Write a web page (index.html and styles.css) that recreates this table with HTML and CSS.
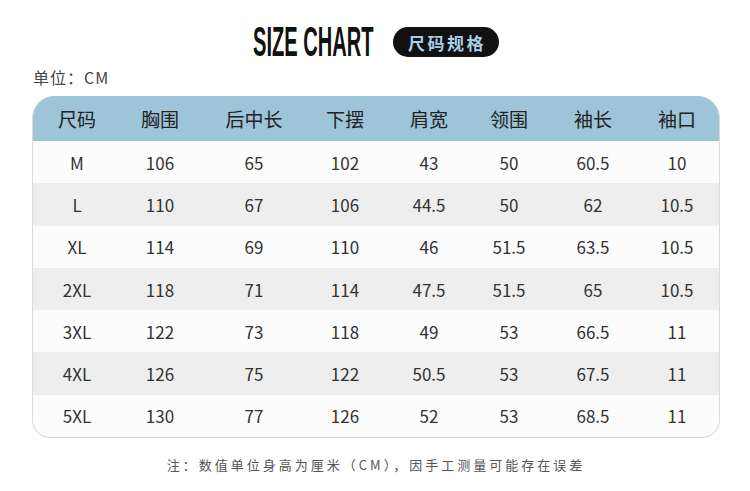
FILE: index.html
```html
<!DOCTYPE html>
<html lang="zh">
<head>
<meta charset="utf-8">
<link rel="stylesheet" href="styles.css">
</head>
<body>
<div class="page">
  <div class="head">
    <svg class="title" width="124" height="40" viewBox="0 0 124 40"><text x="0" y="34" transform="translate(2 0) scale(0.478 1)">SIZE CHART</text></svg>
    <span class="badge">尺码规格</span>
  </div>
  <div class="unit">单位：CM</div>
  <div class="table">
    <div class="row hdr"><span>尺码</span><span>胸围</span><span>后中长</span><span>下摆</span><span>肩宽</span><span>领围</span><span>袖长</span><span>袖口</span></div>
    <div class="row"><span>M</span><span>106</span><span>65</span><span>102</span><span>43</span><span>50</span><span>60.5</span><span>10</span></div>
    <div class="row alt"><span>L</span><span>110</span><span>67</span><span>106</span><span>44.5</span><span>50</span><span>62</span><span>10.5</span></div>
    <div class="row"><span>XL</span><span>114</span><span>69</span><span>110</span><span>46</span><span>51.5</span><span>63.5</span><span>10.5</span></div>
    <div class="row alt"><span>2XL</span><span>118</span><span>71</span><span>114</span><span>47.5</span><span>51.5</span><span>65</span><span>10.5</span></div>
    <div class="row"><span>3XL</span><span>122</span><span>73</span><span>118</span><span>49</span><span>53</span><span>66.5</span><span>11</span></div>
    <div class="row alt"><span>4XL</span><span>126</span><span>75</span><span>122</span><span>50.5</span><span>53</span><span>67.5</span><span>11</span></div>
    <div class="row"><span>5XL</span><span>130</span><span>77</span><span>126</span><span>52</span><span>53</span><span>68.5</span><span>11</span></div>
  </div>
  <div class="note">注：数值单位身高为厘米（CM），因手工测量可能存在误差</div>
</div>
</body>
</html>
```
FILE: styles.css
```css
html, body {
  margin: 0;
  padding: 0;
  background: #fff;
}
.page {
  width: 750px;
  height: 491px;
  font-family: "Noto Sans CJK SC", "Noto Sans", sans-serif;
  color: #333;
  overflow: hidden;
}
.head {
  display: flex;
  justify-content: center;
  align-items: center;
  gap: 18px;
  padding-top: 22px;
  height: 40px;
}
.title {
  overflow: visible;
}
.title text {
  font-family: "Liberation Sans", Arial, sans-serif;
  font-weight: 700;
  font-size: 42px;
  fill: #111;
}
.badge {
  display: inline-flex;
  align-items: center;
  justify-content: center;
  width: 106px;
  height: 30px;
  border-radius: 15px;
  background: #111;
  color: #a6d0e6;
  font-weight: 700;
  font-size: 17px;
  letter-spacing: 2.5px;
  padding-left: 2px;
  box-sizing: border-box;
}
.unit {
  margin: 4px 0 0 33px;
  font-size: 16px;
  letter-spacing: 1px;
  line-height: 22px;
  color: #444;
}
.table {
  margin: 8px 0 0 32px;
  width: 688px;
  box-sizing: border-box;
  border: 1px solid #dadada;
  border-top: none;
  border-radius: 22px 22px 18px 18px;
  overflow: hidden;
  background: #fcfcfc;
}
.row {
  display: grid;
  grid-template-columns: 88px 78px 110px 72px 96px 64px 104px 64px;
  height: 42.3px;
  align-items: center;
  font-size: 17px;
  color: #333;
}
.row span {
  text-align: center;
}
.row.alt {
  background: #eeeeee;
}
.row.hdr {
  height: 45px;
  background: #9dc4d8;
  font-size: 19px;
  color: #222;
  margin: 0 -1px;
  padding-left: 1px;
}
.note {
  margin-top: 17px;
  text-align: center;
  font-size: 13px;
  letter-spacing: 3px;
  color: #555;
  padding-left: 2px;
}
```
